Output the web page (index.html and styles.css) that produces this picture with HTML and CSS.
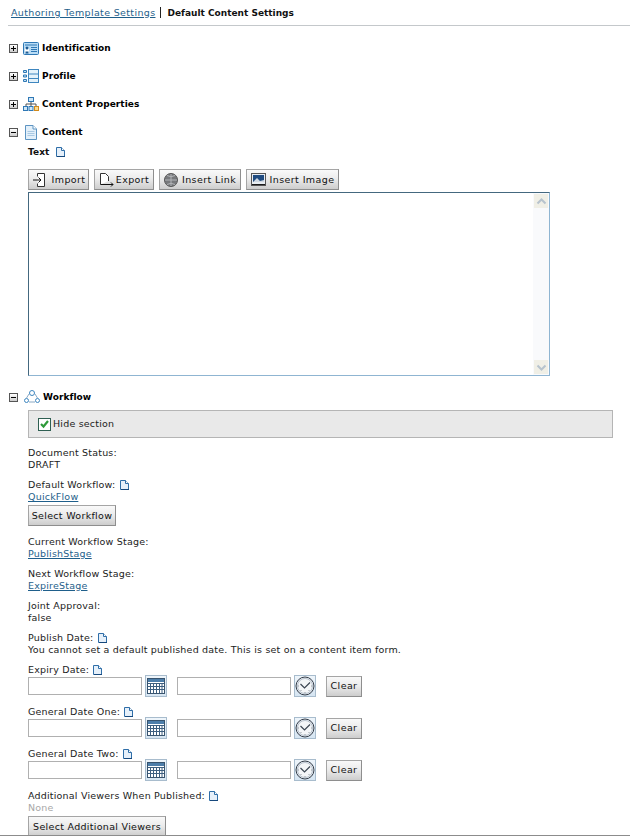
FILE: index.html
```html
<!DOCTYPE html>
<html lang="en">
<head>
<meta charset="utf-8">
<title>Default Content Settings</title>
<link rel="stylesheet" href="styles.css">
</head>
<body>
<svg class="defs" width="0" height="0" aria-hidden="true">
  <symbol id="note" viewBox="0 0 11 11">
    <path d="M1.5 .5H6.5L9.5 3.5V9.5H1.5Z" fill="#e6f0fa" stroke="#2f6ea8"/>
    <path d="M6.5 .5V3.5H9.5" fill="#fff" stroke="#2f6ea8"/>
    <path d="M2 9.5H10" stroke="#16487c"/>
  </symbol>
  <symbol id="cal" viewBox="0 0 18 16">
    <rect x=".5" y=".5" width="17" height="15" fill="#fff" stroke="#39546e"/>
    <rect x="1" y="1" width="16" height="3" fill="#4d7eaa"/>
    <path d="M1 5.500H17M1 8.500H17M1 11.500H17M3.500 5V15M6.500 5V15M9.500 5V15M12.500 5V15M15 5V15" stroke="#3d5f80"/>
  </symbol>
  <symbol id="clock" viewBox="0 0 20 20">
    <circle cx="10" cy="10" r="9" fill="#e9edf2" stroke="#333c48"/>
    <circle cx="10" cy="10" r="7.500" fill="#f4f6f8" stroke="#b9c3ce"/>
    <path d="M5.500 8L9.500 12L15 6.500" fill="none" stroke="#3c4652" stroke-width="1.200"/>
    <path d="M10 16.500V17M3.500 10H4M16 10H16.500M5.500 15L6 14.500M14 14.500L14.500 15" stroke="#3c4652"/>
  </symbol>
</svg>

<header class="crumbs">
  <a href="#" class="link crumb-link">Authoring Template Settings</a>
  <span class="crumb-sep"></span>
  <strong>Default Content Settings</strong>
</header>

<main>
  <h2 class="section">
    <span class="toggle plus"></span>
    <svg class="sec-icon" width="16" height="13" viewBox="0 0 16 13"><rect x=".5" y=".5" width="15" height="12" rx="1" fill="#b9dcf5" stroke="#2f78b5"/><rect x="2" y="6" width="4" height="5" fill="#fff"/><circle cx="4" cy="6" r="1.500" fill="#1d5c94"/><path d="M2.500 10.500H5.500" stroke="#1d5c94" stroke-width="2"/><path d="M8 5.500H14M8 7.500H14M8 9.500H14M2 3H14" stroke="#2f78b5"/></svg>
    Identification
  </h2>
  <h2 class="section">
    <span class="toggle plus"></span>
    <svg class="sec-icon" width="16" height="14" viewBox="0 0 16 14"><rect x="5.500" y=".5" width="10" height="13" fill="#e4f2fb" stroke="#3e86bf"/><path d="M6 5H15M6 9.500H15" stroke="#3e86bf"/><path d="M.5 1.500H3.500V3.500H.5ZM.5 6H3.500V8H.5ZM.5 10.500H3.500V12.500H.5Z" fill="#bfe0f5" stroke="#2f78b5"/></svg>
    Profile
  </h2>
  <h2 class="section">
    <span class="toggle plus"></span>
    <svg class="sec-icon" width="16" height="14" viewBox="0 0 16 14"><path d="M8 4V7M3 10V7H13V10M8 7V10" fill="none" stroke="#555"/><rect x="5.500" y=".5" width="5" height="4" fill="#cfe6f7" stroke="#2f78b5"/><rect x=".5" y="9.500" width="4" height="4" fill="#cfe6f7" stroke="#2f78b5"/><rect x="6" y="9.500" width="4" height="4" fill="#cfe6f7" stroke="#2f78b5"/><rect x="11.500" y="9.500" width="4" height="4" fill="#fbd98c" stroke="#d28a1c"/></svg>
    Content Properties
  </h2>
  <h2 class="section">
    <span class="toggle"></span>
    <svg class="sec-icon sec-doc" width="12" height="15" viewBox="0 0 12 15"><path d="M.5 .5H8L11.500 4V14.500H.5Z" fill="#e3f0fa" stroke="#5d94c2"/><path d="M8 .5V4H11.500" fill="#fff" stroke="#5d94c2"/><path d="M2.500 6.500H9.500M2.500 8.500H9.500M2.500 10.500H9.500" stroke="#a9c9e3"/></svg>
    Content
  </h2>

  <div class="panel">
    <div class="text-label"><b>Text</b> <svg class="note"><use href="#note"/></svg></div>
    <div class="toolbar">
      <button class="btn btn-import" type="button">
        <svg width="15" height="14" viewBox="0 0 15 14"><path d="M5.500 3.500V.5H12.500V13.500H5.500V10.500" fill="#fff" stroke="#333"/><path d="M1 7H9M6.500 4.500L9 7L6.500 9.500" fill="none" stroke="#111"/></svg>
        Import
      </button>
      <button class="btn btn-export" type="button">
        <svg width="15" height="14" viewBox="0 0 15 14"><path d="M1.500 11.500V.5H6.500L9.500 3.500V8" fill="#fff" stroke="#333"/><path d="M1.500 11.500H8M8 11.500H14M12 9.500L14 11.500L12 13.500" fill="none" stroke="#111"/></svg>
        Export
      </button>
      <button class="btn btn-link" type="button">
        <svg width="14" height="14" viewBox="0 0 14 14"><circle cx="7" cy="7" r="6.500" fill="#77797c" stroke="#555"/><path d="M1 7H13M7 1V13M3 2.500Q7 5 11 2.500M3 11.500Q7 9 11 11.500" fill="none" stroke="#b3b5b8"/></svg>
        Insert Link
      </button>
      <button class="btn btn-image" type="button">
        <svg width="15" height="13" viewBox="0 0 15 13"><rect x=".5" y=".5" width="14" height="12" fill="#e8edf2" stroke="#555"/><rect x="2" y="2" width="11" height="7" fill="#1f4b80"/><path d="M2 9L6 5L9 8L13 7V9Z" fill="#cfd8e2"/><path d="M1 11.500H14" stroke="#1c1c1c"/></svg>
        Insert Image
      </button>
    </div>
    <div class="editor">
      <div class="scroll">
        <span class="scroll-btn"><svg width="11" height="7" viewBox="0 0 11 7"><path d="M1.500 5.500L5.500 1.500L9.500 5.500" fill="none" stroke="#b7c3cd" stroke-width="2"/></svg></span>
        <span class="scroll-btn"><svg width="11" height="7" viewBox="0 0 11 7"><path d="M1.500 1.500L5.500 5.500L9.500 1.500" fill="none" stroke="#b7c3cd" stroke-width="2"/></svg></span>
      </div>
    </div>
  </div>

  <h2 class="section section-wf">
    <span class="toggle"></span>
    <svg class="sec-icon sec-wf" width="16" height="14" viewBox="0 0 16 14"><path d="M5 4L2.500 8M11 4L13.500 8M5 12H11" stroke="#8aa9c4" fill="none"/><circle cx="8" cy="3" r="2.500" fill="#fff" stroke="#3e86bf"/><circle cx="2.500" cy="10.500" r="2" fill="#fff" stroke="#3e86bf"/><circle cx="13.500" cy="10.500" r="2" fill="#fff" stroke="#3e86bf"/></svg>
    Workflow
  </h2>

  <div class="panel">
    <div class="hide-bar">
      <span class="check"><svg width="11" height="10" viewBox="0 0 11 10"><path d="M2 5L4.500 7.500L9 2" fill="none" stroke="#2f9a3a" stroke-width="2.200"/></svg></span>
      Hide section
    </div>

    <div class="field first">Document Status:<br>DRAFT</div>
    <div class="field">
      Default Workflow: <svg class="note"><use href="#note"/></svg><br>
      <a href="#" class="link">QuickFlow</a>
      <button class="btn btn-block" type="button">Select Workflow</button>
    </div>
    <div class="field field-after-btn">Current Workflow Stage:<br><a href="#" class="link">PublishStage</a></div>
    <div class="field">Next Workflow Stage:<br><a href="#" class="link">ExpireStage</a></div>
    <div class="field">Joint Approval:<br>false</div>
    <div class="field">Publish Date: <svg class="note"><use href="#note"/></svg><br>You cannot set a default published date. This is set on a content item form.</div>

    <div class="field">
      Expiry Date: <svg class="note"><use href="#note"/></svg>
      <div class="date-row">
        <input class="input" type="text" aria-label="Expiry date">
        <span class="pick"><svg width="18" height="16"><use href="#cal"/></svg></span>
        <input class="input input-time" type="text" aria-label="Expiry time">
        <span class="pick"><svg width="20" height="20"><use href="#clock"/></svg></span>
        <button class="btn btn-clear" type="button">Clear</button>
      </div>
    </div>
    <div class="field">
      General Date One: <svg class="note"><use href="#note"/></svg>
      <div class="date-row">
        <input class="input" type="text" aria-label="General date one">
        <span class="pick"><svg width="18" height="16"><use href="#cal"/></svg></span>
        <input class="input input-time" type="text" aria-label="General time one">
        <span class="pick"><svg width="20" height="20"><use href="#clock"/></svg></span>
        <button class="btn btn-clear" type="button">Clear</button>
      </div>
    </div>
    <div class="field">
      General Date Two: <svg class="note"><use href="#note"/></svg>
      <div class="date-row">
        <input class="input" type="text" aria-label="General date two">
        <span class="pick"><svg width="18" height="16"><use href="#cal"/></svg></span>
        <input class="input input-time" type="text" aria-label="General time two">
        <span class="pick"><svg width="20" height="20"><use href="#clock"/></svg></span>
        <button class="btn btn-clear" type="button">Clear</button>
      </div>
    </div>
    <div class="field">
      Additional Viewers When Published: <svg class="note"><use href="#note"/></svg><br>
      <span class="muted">None</span>
      <button class="btn btn-block btn-viewers" type="button">Select Additional Viewers</button>
    </div>
  </div>
</main>
<div class="page-edge"></div>
</body>
</html>
```

FILE: styles.css
```css
html, body {
  height: 836px;
  overflow: hidden;
}
body {
  margin: 0;
  background: #fff;
  color: #222;
  font: 9.5px/12px "DejaVu Sans", Verdana, sans-serif;
  letter-spacing: .2px;
}
.defs { position: absolute; }
.link { color: #1f5f8b; text-decoration: underline; }
.crumb-link { letter-spacing: .35px; }
.crumbs {
  display: flex;
  align-items: center;
  height: 26px;
  margin-left: 8px;
  padding-left: 3px;
  box-sizing: border-box;
  border-bottom: 1px solid #c4c8cb;
}
.crumbs strong { font-size: 9px; letter-spacing: 0; color: #111; }
.crumb-sep {
  width: 1px;
  height: 11px;
  background: #222;
  margin: 0 6px 0 5px;
}
main { padding-top: 8px; }
.section {
  display: flex;
  align-items: center;
  height: 28px;
  margin: 0;
  padding-left: 9px;
  font-size: 9px;
  font-weight: bold;
  letter-spacing: .05px;
  color: #000;
}
.section-wf { margin-top: 7px; }
.toggle {
  position: relative;
  flex: none;
  width: 9px;
  height: 9px;
  box-sizing: border-box;
  border: 1px solid #555;
  background: linear-gradient(#fff, #ccc);
  margin-right: 5px;
}
.toggle::before {
  content: "";
  position: absolute;
  left: 1px; top: 3px;
  width: 5px; height: 1px;
  background: #000;
}
.plus::after {
  content: "";
  position: absolute;
  left: 3px; top: 1px;
  width: 1px; height: 5px;
  background: #000;
}
.sec-icon { flex: none; margin-right: 3px; }
.sec-doc { margin: 0 5px 0 2px; }
.sec-wf { margin-left: 1px; }
.panel { padding-left: 28px; }
.text-label { height: 12px; font-size: 9px; font-weight: bold; letter-spacing: .05px; color: #111; }
.text-label b { margin-right: 2px; }
.note { width: 11px; height: 11px; margin: -2px 0; vertical-align: -1px; }
.toolbar { display: flex; gap: 5px; margin-top: 11px; align-items: flex-start; }
.btn {
  display: inline-flex;
  align-items: center;
  justify-content: center;
  gap: 5px;
  box-sizing: border-box;
  height: 21px;
  padding: 0 2px;
  border: 1px solid #8e8e8e;
  border-color: #a5a5a5 #8e8e8e #8e8e8e #a5a5a5;
  background: linear-gradient(#f9f9f9, #ececec 45%, #cdcdcd);
  color: #111;
  font: inherit;
  letter-spacing: .4px;
  white-space: nowrap;
}
.btn-import { width: 61px; }
.btn-export { width: 60px; gap: 2px; }
.btn-link { width: 82px; gap: 4px; }
.btn-image { width: 93px; gap: 4px; }
.editor {
  display: flex;
  justify-content: flex-end;
  width: 522px;
  height: 184px;
  box-sizing: border-box;
  margin-top: 2px;
  border: 1px solid #4f7690;
  border-color: #44687f #8fb5d2 #8fb5d2 #44687f;
}
.scroll {
  display: flex;
  flex-direction: column;
  justify-content: space-between;
  width: 16px;
  padding: 1px;
  box-sizing: border-box;
  background: #f9fafc;
}
.scroll-btn {
  display: flex;
  align-items: center;
  justify-content: center;
  height: 14px;
  background: #f0efe6;
}
.hide-bar {
  display: flex;
  align-items: center;
  gap: 2px;
  width: 585px;
  height: 28px;
  margin-top: -1px;
  box-sizing: border-box;
  padding-left: 9px;
  border: 1px solid #b5b5b5;
  background: #e9e9e9;
}
.check {
  display: flex;
  align-items: center;
  justify-content: center;
  width: 13px;
  height: 13px;
  box-sizing: border-box;
  border: 1px solid #2f5f52;
  background: #fff;
}
.field { margin-top: 8px; }
.field.first { margin-top: 9px; }
.field.field-after-btn { margin-top: 10px; }
.btn-block { display: flex; width: 88px; margin-top: 2px; letter-spacing: .3px; }
.btn-viewers { width: 138px; }
.muted { color: #a8a8a8; }
.date-row { display: flex; align-items: center; height: 22px; margin-top: -1px; padding-bottom: 1px; }
.input {
  box-sizing: border-box;
  width: 114px;
  height: 18px;
  padding: 0;
  border: 1px solid #b0b0b0;
  background: #fff;
}
.input-time { margin-left: 10px; }
.pick {
  display: flex;
  align-items: center;
  justify-content: center;
  box-sizing: border-box;
  width: 22px;
  height: 22px;
  margin-left: 3px;
  border: 1px solid #a8bccd;
  background: linear-gradient(#eef5fb, #d6e5f2);
}
.btn-clear { width: 36px; margin-left: 10px; }
.page-edge {
  position: absolute;
  left: 0;
  right: 0;
  top: 835px;
  height: 1px;
  background: #8c8c8c;
}
```
